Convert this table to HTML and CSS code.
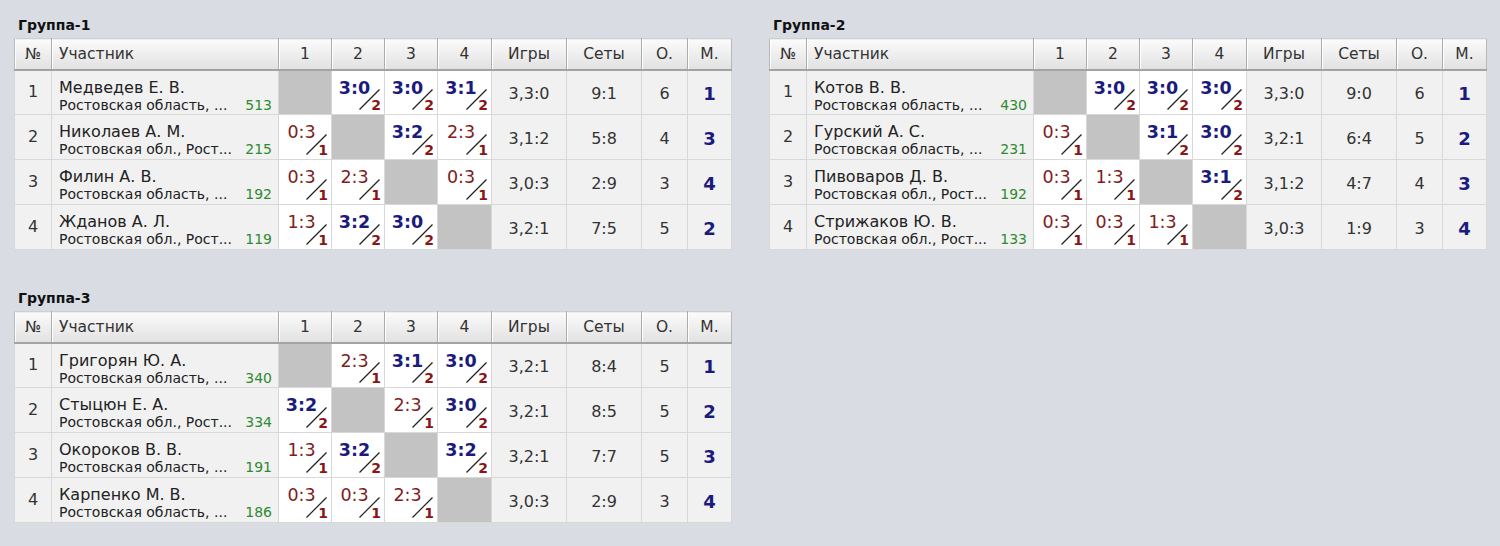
FILE: index.html
```html
<!DOCTYPE html>
<html lang="ru">
<head>
<meta charset="utf-8">
<title>Группы</title>
<link rel="stylesheet" href="styles.css">
</head>
<body>
<div class="groups">

<section class="group">
<h2 class="grp-title">Группа-1</h2>
<table class="tbl">
<colgroup><col class="c-n"><col class="c-p"><col class="c-s"><col class="c-s"><col class="c-s"><col class="c-s4"><col class="c-g"><col class="c-g"><col class="c-o"><col class="c-m"></colgroup>
<thead><tr><th>№</th><th class="name">Участник</th><th>1</th><th>2</th><th>3</th><th>4</th><th>Игры</th><th>Сеты</th><th>О.</th><th class="last">М.</th></tr></thead>
<tbody>
<tr><td>1</td><td class="pl"><div class="nm">Медведев Е. В.</div><div class="rg"><span>Ростовская область, ...</span><span class="rt">513</span></div></td>
<td class="x"></td>
<td class="res"><span class="sc w">3:0</span><svg class="slash" viewBox="0 0 21 21"><line x1="0.5" y1="20.5" x2="20.5" y2="0.5"/></svg><span class="pts">2</span></td>
<td class="res"><span class="sc w">3:0</span><svg class="slash" viewBox="0 0 21 21"><line x1="0.5" y1="20.5" x2="20.5" y2="0.5"/></svg><span class="pts">2</span></td>
<td class="res"><span class="sc w">3:1</span><svg class="slash" viewBox="0 0 21 21"><line x1="0.5" y1="20.5" x2="20.5" y2="0.5"/></svg><span class="pts">2</span></td>
<td class="v">3,3:0</td><td class="v">9:1</td><td class="v">6</td><td class="rk">1</td></tr>
<tr><td>2</td><td class="pl"><div class="nm">Николаев А. М.</div><div class="rg"><span>Ростовская обл., Рост...</span><span class="rt">215</span></div></td>
<td class="res"><span class="sc l">0:3</span><svg class="slash" viewBox="0 0 21 21"><line x1="0.5" y1="20.5" x2="20.5" y2="0.5"/></svg><span class="pts">1</span></td>
<td class="x"></td>
<td class="res"><span class="sc w">3:2</span><svg class="slash" viewBox="0 0 21 21"><line x1="0.5" y1="20.5" x2="20.5" y2="0.5"/></svg><span class="pts">2</span></td>
<td class="res"><span class="sc l">2:3</span><svg class="slash" viewBox="0 0 21 21"><line x1="0.5" y1="20.5" x2="20.5" y2="0.5"/></svg><span class="pts">1</span></td>
<td class="v">3,1:2</td><td class="v">5:8</td><td class="v">4</td><td class="rk">3</td></tr>
<tr><td>3</td><td class="pl"><div class="nm">Филин А. В.</div><div class="rg"><span>Ростовская область, ...</span><span class="rt">192</span></div></td>
<td class="res"><span class="sc l">0:3</span><svg class="slash" viewBox="0 0 21 21"><line x1="0.5" y1="20.5" x2="20.5" y2="0.5"/></svg><span class="pts">1</span></td>
<td class="res"><span class="sc l">2:3</span><svg class="slash" viewBox="0 0 21 21"><line x1="0.5" y1="20.5" x2="20.5" y2="0.5"/></svg><span class="pts">1</span></td>
<td class="x"></td>
<td class="res"><span class="sc l">0:3</span><svg class="slash" viewBox="0 0 21 21"><line x1="0.5" y1="20.5" x2="20.5" y2="0.5"/></svg><span class="pts">1</span></td>
<td class="v">3,0:3</td><td class="v">2:9</td><td class="v">3</td><td class="rk">4</td></tr>
<tr><td>4</td><td class="pl"><div class="nm">Жданов А. Л.</div><div class="rg"><span>Ростовская обл., Рост...</span><span class="rt">119</span></div></td>
<td class="res"><span class="sc l">1:3</span><svg class="slash" viewBox="0 0 21 21"><line x1="0.5" y1="20.5" x2="20.5" y2="0.5"/></svg><span class="pts">1</span></td>
<td class="res"><span class="sc w">3:2</span><svg class="slash" viewBox="0 0 21 21"><line x1="0.5" y1="20.5" x2="20.5" y2="0.5"/></svg><span class="pts">2</span></td>
<td class="res"><span class="sc w">3:0</span><svg class="slash" viewBox="0 0 21 21"><line x1="0.5" y1="20.5" x2="20.5" y2="0.5"/></svg><span class="pts">2</span></td>
<td class="x"></td>
<td class="v">3,2:1</td><td class="v">7:5</td><td class="v">5</td><td class="rk">2</td></tr>
</tbody>
</table>
</section>

<section class="group">
<h2 class="grp-title">Группа-2</h2>
<table class="tbl">
<colgroup><col class="c-n"><col class="c-p"><col class="c-s"><col class="c-s"><col class="c-s"><col class="c-s4"><col class="c-g"><col class="c-g"><col class="c-o"><col class="c-m"></colgroup>
<thead><tr><th>№</th><th class="name">Участник</th><th>1</th><th>2</th><th>3</th><th>4</th><th>Игры</th><th>Сеты</th><th>О.</th><th class="last">М.</th></tr></thead>
<tbody>
<tr><td>1</td><td class="pl"><div class="nm">Котов В. В.</div><div class="rg"><span>Ростовская область, ...</span><span class="rt">430</span></div></td>
<td class="x"></td>
<td class="res"><span class="sc w">3:0</span><svg class="slash" viewBox="0 0 21 21"><line x1="0.5" y1="20.5" x2="20.5" y2="0.5"/></svg><span class="pts">2</span></td>
<td class="res"><span class="sc w">3:0</span><svg class="slash" viewBox="0 0 21 21"><line x1="0.5" y1="20.5" x2="20.5" y2="0.5"/></svg><span class="pts">2</span></td>
<td class="res"><span class="sc w">3:0</span><svg class="slash" viewBox="0 0 21 21"><line x1="0.5" y1="20.5" x2="20.5" y2="0.5"/></svg><span class="pts">2</span></td>
<td class="v">3,3:0</td><td class="v">9:0</td><td class="v">6</td><td class="rk">1</td></tr>
<tr><td>2</td><td class="pl"><div class="nm">Гурский А. С.</div><div class="rg"><span>Ростовская область, ...</span><span class="rt">231</span></div></td>
<td class="res"><span class="sc l">0:3</span><svg class="slash" viewBox="0 0 21 21"><line x1="0.5" y1="20.5" x2="20.5" y2="0.5"/></svg><span class="pts">1</span></td>
<td class="x"></td>
<td class="res"><span class="sc w">3:1</span><svg class="slash" viewBox="0 0 21 21"><line x1="0.5" y1="20.5" x2="20.5" y2="0.5"/></svg><span class="pts">2</span></td>
<td class="res"><span class="sc w">3:0</span><svg class="slash" viewBox="0 0 21 21"><line x1="0.5" y1="20.5" x2="20.5" y2="0.5"/></svg><span class="pts">2</span></td>
<td class="v">3,2:1</td><td class="v">6:4</td><td class="v">5</td><td class="rk">2</td></tr>
<tr><td>3</td><td class="pl"><div class="nm">Пивоваров Д. В.</div><div class="rg"><span>Ростовская обл., Рост...</span><span class="rt">192</span></div></td>
<td class="res"><span class="sc l">0:3</span><svg class="slash" viewBox="0 0 21 21"><line x1="0.5" y1="20.5" x2="20.5" y2="0.5"/></svg><span class="pts">1</span></td>
<td class="res"><span class="sc l">1:3</span><svg class="slash" viewBox="0 0 21 21"><line x1="0.5" y1="20.5" x2="20.5" y2="0.5"/></svg><span class="pts">1</span></td>
<td class="x"></td>
<td class="res"><span class="sc w">3:1</span><svg class="slash" viewBox="0 0 21 21"><line x1="0.5" y1="20.5" x2="20.5" y2="0.5"/></svg><span class="pts">2</span></td>
<td class="v">3,1:2</td><td class="v">4:7</td><td class="v">4</td><td class="rk">3</td></tr>
<tr><td>4</td><td class="pl"><div class="nm">Стрижаков Ю. В.</div><div class="rg"><span>Ростовская обл., Рост...</span><span class="rt">133</span></div></td>
<td class="res"><span class="sc l">0:3</span><svg class="slash" viewBox="0 0 21 21"><line x1="0.5" y1="20.5" x2="20.5" y2="0.5"/></svg><span class="pts">1</span></td>
<td class="res"><span class="sc l">0:3</span><svg class="slash" viewBox="0 0 21 21"><line x1="0.5" y1="20.5" x2="20.5" y2="0.5"/></svg><span class="pts">1</span></td>
<td class="res"><span class="sc l">1:3</span><svg class="slash" viewBox="0 0 21 21"><line x1="0.5" y1="20.5" x2="20.5" y2="0.5"/></svg><span class="pts">1</span></td>
<td class="x"></td>
<td class="v">3,0:3</td><td class="v">1:9</td><td class="v">3</td><td class="rk">4</td></tr>
</tbody>
</table>
</section>

<section class="group">
<h2 class="grp-title">Группа-3</h2>
<table class="tbl">
<colgroup><col class="c-n"><col class="c-p"><col class="c-s"><col class="c-s"><col class="c-s"><col class="c-s4"><col class="c-g"><col class="c-g"><col class="c-o"><col class="c-m"></colgroup>
<thead><tr><th>№</th><th class="name">Участник</th><th>1</th><th>2</th><th>3</th><th>4</th><th>Игры</th><th>Сеты</th><th>О.</th><th class="last">М.</th></tr></thead>
<tbody>
<tr><td>1</td><td class="pl"><div class="nm">Григорян Ю. А.</div><div class="rg"><span>Ростовская область, ...</span><span class="rt">340</span></div></td>
<td class="x"></td>
<td class="res"><span class="sc l">2:3</span><svg class="slash" viewBox="0 0 21 21"><line x1="0.5" y1="20.5" x2="20.5" y2="0.5"/></svg><span class="pts">1</span></td>
<td class="res"><span class="sc w">3:1</span><svg class="slash" viewBox="0 0 21 21"><line x1="0.5" y1="20.5" x2="20.5" y2="0.5"/></svg><span class="pts">2</span></td>
<td class="res"><span class="sc w">3:0</span><svg class="slash" viewBox="0 0 21 21"><line x1="0.5" y1="20.5" x2="20.5" y2="0.5"/></svg><span class="pts">2</span></td>
<td class="v">3,2:1</td><td class="v">8:4</td><td class="v">5</td><td class="rk">1</td></tr>
<tr><td>2</td><td class="pl"><div class="nm">Стыцюн Е. А.</div><div class="rg"><span>Ростовская обл., Рост...</span><span class="rt">334</span></div></td>
<td class="res"><span class="sc w">3:2</span><svg class="slash" viewBox="0 0 21 21"><line x1="0.5" y1="20.5" x2="20.5" y2="0.5"/></svg><span class="pts">2</span></td>
<td class="x"></td>
<td class="res"><span class="sc l">2:3</span><svg class="slash" viewBox="0 0 21 21"><line x1="0.5" y1="20.5" x2="20.5" y2="0.5"/></svg><span class="pts">1</span></td>
<td class="res"><span class="sc w">3:0</span><svg class="slash" viewBox="0 0 21 21"><line x1="0.5" y1="20.5" x2="20.5" y2="0.5"/></svg><span class="pts">2</span></td>
<td class="v">3,2:1</td><td class="v">8:5</td><td class="v">5</td><td class="rk">2</td></tr>
<tr><td>3</td><td class="pl"><div class="nm">Окороков В. В.</div><div class="rg"><span>Ростовская область, ...</span><span class="rt">191</span></div></td>
<td class="res"><span class="sc l">1:3</span><svg class="slash" viewBox="0 0 21 21"><line x1="0.5" y1="20.5" x2="20.5" y2="0.5"/></svg><span class="pts">1</span></td>
<td class="res"><span class="sc w">3:2</span><svg class="slash" viewBox="0 0 21 21"><line x1="0.5" y1="20.5" x2="20.5" y2="0.5"/></svg><span class="pts">2</span></td>
<td class="x"></td>
<td class="res"><span class="sc w">3:2</span><svg class="slash" viewBox="0 0 21 21"><line x1="0.5" y1="20.5" x2="20.5" y2="0.5"/></svg><span class="pts">2</span></td>
<td class="v">3,2:1</td><td class="v">7:7</td><td class="v">5</td><td class="rk">3</td></tr>
<tr><td>4</td><td class="pl"><div class="nm">Карпенко М. В.</div><div class="rg"><span>Ростовская область, ...</span><span class="rt">186</span></div></td>
<td class="res"><span class="sc l">0:3</span><svg class="slash" viewBox="0 0 21 21"><line x1="0.5" y1="20.5" x2="20.5" y2="0.5"/></svg><span class="pts">1</span></td>
<td class="res"><span class="sc l">0:3</span><svg class="slash" viewBox="0 0 21 21"><line x1="0.5" y1="20.5" x2="20.5" y2="0.5"/></svg><span class="pts">1</span></td>
<td class="res"><span class="sc l">2:3</span><svg class="slash" viewBox="0 0 21 21"><line x1="0.5" y1="20.5" x2="20.5" y2="0.5"/></svg><span class="pts">1</span></td>
<td class="x"></td>
<td class="v">3,0:3</td><td class="v">2:9</td><td class="v">3</td><td class="rk">4</td></tr>
</tbody>
</table>
</section>

</div>
</body>
</html>
```

FILE: styles.css
```css
html, body {
  background: #d9dce3;
}
body {
  margin: 0;
  padding: 16px 0 0 14px;
  font-family: "DejaVu Sans", "Liberation Sans", sans-serif;
}
.groups {
  display: grid;
  grid-template-columns: 717px 717px;
  column-gap: 38px;
  row-gap: 39px;
  align-items: start;
}
.grp-title {
  margin: 0 0 4px 4px;
  font: bold 14px/18px "DejaVu Sans", sans-serif;
  color: #111;
}
.tbl {
  width: 717px;
  table-layout: fixed;
  border-collapse: collapse;
  border: 1px solid #b8b8b8;
}
.c-n { width: 37px; }
.c-p { width: 227px; }
.c-s { width: 53px; }
.c-s4 { width: 54px; }
.c-g { width: 75px; }
.c-o { width: 46px; }
.c-m { width: 44px; }

.tbl thead tr {
  height: 31px;
}
.tbl tbody tr {
  height: 45px;
}
.tbl th {
  padding: 0;
  font: normal 15.5px/18px "DejaVu Sans", sans-serif;
  color: #333;
  text-align: center;
  background: linear-gradient(#fbfbfb, #e1e1e1);
  border-top: 1px solid #cfcfcf;
  border-right: 1px solid #acacac;
  border-bottom: 2px solid #a3a3a3;
  box-shadow: inset 1px 0 0 #ffffff;
}
.tbl th.name {
  text-align: left;
  padding-left: 7px;
}
.tbl th.last {
  border-right: 0;
}
.tbl td {
  padding: 0;
  border: 1px solid #d8d8d8;
  background: #f1f1f1;
  color: #333;
  text-align: center;
  vertical-align: middle;
  font-size: 16px;
  line-height: 18px;
}
.tbl td.v {
  padding-top: 3px;
}
.tbl td.pl {
  text-align: left;
  vertical-align: top;
  padding: 8px 6px 0 7px;
}
.nm {
  font-size: 16px;
  line-height: 18px;
  color: #222;
  white-space: nowrap;
}
.rg {
  display: flex;
  justify-content: space-between;
  font-size: 14px;
  line-height: 16px;
  color: #222;
  white-space: nowrap;
}
.rt {
  color: #2f8a2f;
}
.tbl td.x {
  background: #c3c3c3;
}
.tbl td.res {
  position: relative;
  background: #ffffff;
  vertical-align: top;
}
.sc {
  display: block;
  padding: 7px 7px 0 0;
  font-size: 17.5px;
  line-height: 20px;
}
.sc.w {
  font-weight: bold;
  color: #1b1b7e;
}
.sc.l {
  color: #7e2020;
}
.slash {
  position: absolute;
  right: 4px;
  bottom: 4px;
  width: 21px;
  height: 21px;
  stroke: #222;
  stroke-width: 1.2;
}
.pts {
  position: absolute;
  right: 3px;
  bottom: 2px;
  font: bold 14px/14px "DejaVu Sans", sans-serif;
  color: #8a1515;
}
.tbl td.rk {
  font-weight: bold;
  font-size: 18px;
  color: #1b1b7e;
  padding-top: 3px;
}
```
